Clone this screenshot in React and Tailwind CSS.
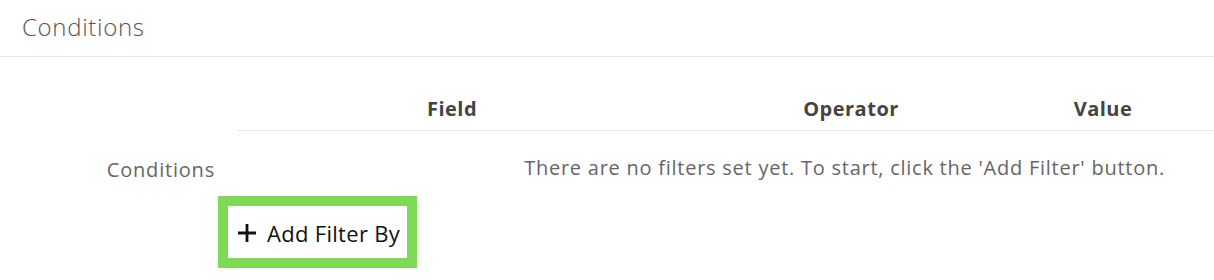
export default function App() {
  const font = { fontFamily: '"Open Sans", "Lato", sans-serif' };
  return (
    <div className="w-[1214px] h-[280px] bg-white" style={font}>
      <div className="h-[57px] border-b border-[#e6e6ea] pl-[22px] flex items-center">
        <h2 className="text-[24px] font-light text-[#555] leading-none tracking-[0.7px] -mt-[3px]">Conditions</h2>
      </div>
      <div className="flex pt-[30px]">
        <div className="w-[237px] shrink-0 pt-[69px] pr-[22px] text-right text-[20px] leading-[28px] tracking-[0.8px] text-[#666]">Conditions</div>
        <div className="flex-1">
          <div className="flex h-[44px] border-b border-[#e6e6ea] text-[20px] font-bold tracking-[0.5px] text-[#444] items-start">
            <div className="w-[430px] text-center leading-[44px]">Field</div>
            <div className="w-[368px] text-center leading-[44px]">Operator</div>
            <div className="w-[136px] text-center leading-[44px]">Value</div>
          </div>
          <div className="h-[60px] pt-[23px] text-right pr-[49px] text-[20px] leading-[28px] tracking-[0.75px] text-[#666]">
            There are no filters set yet. To start, click the 'Add Filter' button.
          </div>
        </div>
      </div>
      <div className="pl-[218px] mt-[5px]">
        <button className="w-[199px] h-[72px] border-[10px] border-[#7ed957] bg-white flex items-center pl-[9px] gap-[10px] text-[22px] tracking-[0.3px] text-[#111]">
          <svg width="20" height="20" viewBox="0 0 20 20" fill="none" stroke="#111" strokeWidth="2.8" className="mt-[2px]">
            <path d="M10 1v18M1 10h18" />
          </svg>
          <span className="mt-[2px]">Add Filter By</span>
        </button>
      </div>
    </div>
  );
}
